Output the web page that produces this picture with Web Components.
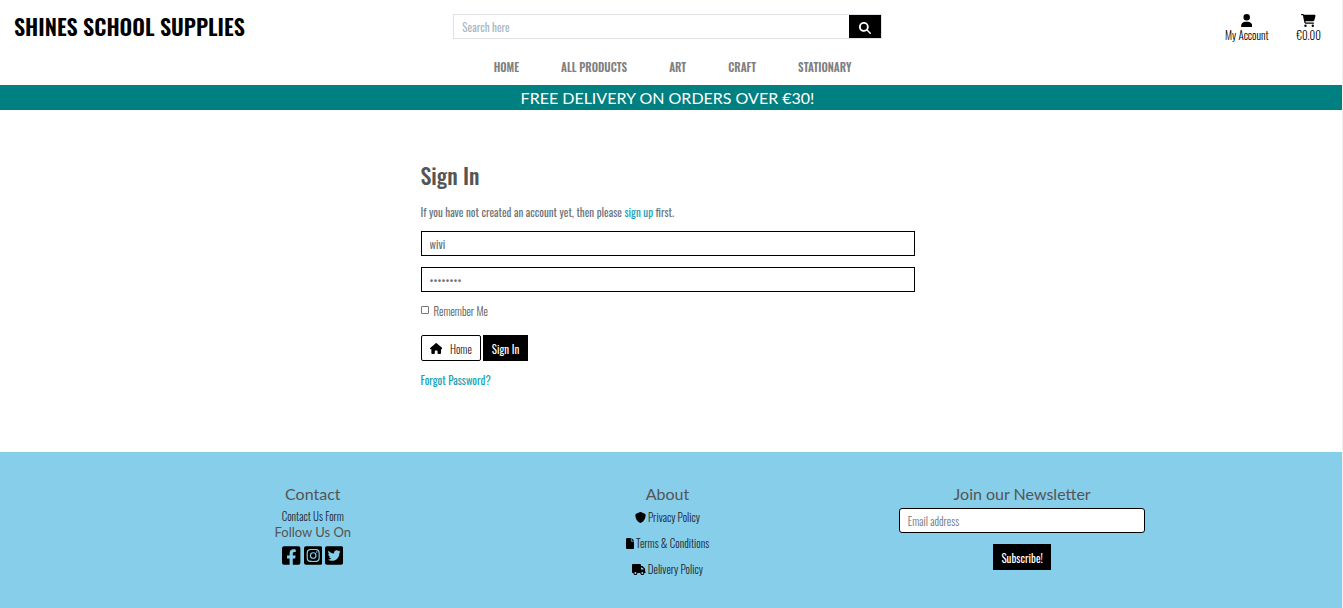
<!DOCTYPE html>
<html lang="en">
<head>
<meta charset="utf-8">
<meta name="viewport" content="width=device-width, initial-scale=1">
<title>Shines School Supplies</title>
<style>
  html { background: #fff; }
  body {
    margin: 0;
    --body-font: Oswald, "Liberation Sans Narrow", "Roboto Condensed", "Open Sans Condensed", "Liberation Sans", sans-serif;
    --title-font: Lato, sans-serif;
    --link: #17a2b8;
    font: 300 11px/16px var(--body-font);
    color: #555;
  }
</style>
</head>
<body>
<shop-app></shop-app>

<script>
const ICONS = {
  search: [512, 'M416 208c0 45.9-14.9 88.3-40 122.7L502.6 457.4c12.5 12.5 12.5 32.8 0 45.3s-32.8 12.5-45.3 0L330.7 376c-34.4 25.2-76.8 40-122.7 40C93.1 416 0 322.9 0 208S93.1 0 208 0S416 93.1 416 208zM208 338a130 130 0 1 0 0-260 130 130 0 1 0 0 260z'],
  user: [448, 'M224 256A128 128 0 1 0 224 0a128 128 0 1 0 0 256zm-45.7 48C79.8 304 0 383.8 0 482.3C0 498.7 13.3 512 29.7 512H418.3c16.4 0 29.7-13.3 29.7-29.7C448 383.8 368.2 304 269.7 304H178.3z'],
  cart: [576, 'M0 24C0 10.7 10.7 0 24 0H69.5c22 0 41.5 12.8 50.6 32h411c26.3 0 45.5 25 38.6 50.4l-41 152.3c-8.5 31.4-37 53.3-69.5 53.3H170.7l5.4 28.5c2.2 11.3 12.1 19.5 23.6 19.5H488c13.3 0 24 10.7 24 24s-10.7 24-24 24H199.7c-34.6 0-64.3-24.6-70.7-58.5L77.4 54.5c-.7-3.8-4-6.5-7.9-6.5H24C10.7 48 0 37.3 0 24zM128 464a48 48 0 1 1 96 0 48 48 0 1 1 -96 0zm336-48a48 48 0 1 1 0 96 48 48 0 1 1 0-96z'],
  home: [576, 'M575.8 255.5c0 18-15 32.1-32 32.1h-32l.7 160.2c0 2.7-.2 5.4-.5 8.1V472c0 22.1-17.9 40-40 40H456c-1.1 0-2.2 0-3.3-.1c-1.4 .1-2.8 .1-4.2 .1H416 392c-22.1 0-40-17.9-40-40V448 384c0-17.7-14.3-32-32-32H256c-17.7 0-32 14.3-32 32v64 24c0 22.1-17.9 40-40 40H160 128.1c-1.5 0-3-.1-4.5-.2c-1.2 .1-2.4 .2-3.6 .2H104c-22.1 0-40-17.9-40-40V360c0-.9 0-1.9 .1-2.8V287.6H32c-18 0-32-14-32-32.1c0-9 3-17 10-24L266.4 8c7-7 15-8 22-8s15 2 21 7L564.8 231.5c8 7 12 15 11 24z'],
  shield: [512, 'M256 0c4.6 0 9.2 1 13.4 2.9L457.7 82.8c22 9.3 38.4 31 38.3 57.2c-.5 99.2-41.3 280.7-213.6 363.2c-16.7 8-36.1 8-52.8 0C57.3 420.7 16.5 239.2 16 140c-.1-26.2 16.3-47.9 38.3-57.2L242.7 2.9C246.8 1 251.4 0 256 0z'],
  file: [384, 'M0 64C0 28.7 28.7 0 64 0H224V128c0 17.7 14.3 32 32 32H384V448c0 35.3-28.7 64-64 64H64c-35.3 0-64-28.7-64-64V64zm384 64H256V0L384 128z'],
  truck: [640, 'M48 0C21.5 0 0 21.5 0 48V368c0 26.5 21.5 48 48 48H64c0 53 43 96 96 96s96-43 96-96H384c0 53 43 96 96 96s96-43 96-96h32c17.7 0 32-14.3 32-32s-14.3-32-32-32V288 256 237.3c0-17-6.7-33.3-18.7-45.3L512 114.7c-12-12-28.3-18.7-45.3-18.7H416V48c0-26.5-21.5-48-48-48H48zM416 160h50.7L544 237.3V256H416V160zM112 416a48 48 0 1 1 96 0 48 48 0 1 1 -96 0zm368-48a48 48 0 1 1 0 96 48 48 0 1 1 0-96z'],
  facebook: [448, 'M400 32H48A48 48 0 0 0 0 80v352a48 48 0 0 0 48 48h137.25V327.69h-63V256h63v-54.64c0-62.15 37-96.48 93.67-96.48 27.14 0 55.52 4.84 55.52 4.84v61h-31.27c-30.81 0-40.42 19.12-40.42 38.73V256h68.78l-11 71.69h-57.78V480H400a48 48 0 0 0 48-48V80a48 48 0 0 0-48-48z'],
  instagram: [448, 'M224,202.66A53.34,53.34,0,1,0,277.36,256,53.38,53.38,0,0,0,224,202.66Zm124.71-41a54,54,0,0,0-30.41-30.41c-21-8.29-71-6.43-94.3-6.43s-73.25-1.93-94.31,6.43a54,54,0,0,0-30.41,30.41c-8.28,21-6.43,71.05-6.43,94.33S91,329.26,99.32,350.33a54,54,0,0,0,30.41,30.41c21,8.29,71,6.43,94.31,6.43s73.24,1.93,94.3-6.43a54,54,0,0,0,30.41-30.41c8.35-21,6.43-71.05,6.43-94.33S357.1,182.74,348.75,161.67ZM224,338a82,82,0,1,1,82-82A81.9,81.9,0,0,1,224,338Zm85.38-148.3a19.14,19.14,0,1,1,19.13-19.14A19.1,19.1,0,0,1,309.42,189.74ZM400,32H48A48,48,0,0,0,0,80V432a48,48,0,0,0,48,48H400a48,48,0,0,0,48-48V80A48,48,0,0,0,400,32ZM382.88,322c-1.29,25.63-7.14,48.34-25.85,67s-41.4,24.63-67,25.85c-26.41,1.49-105.59,1.49-132,0-25.63-1.29-48.26-7.15-67-25.85s-24.63-41.42-25.85-67c-1.49-26.42-1.49-105.61,0-132,1.29-25.63,7.07-48.34,25.85-67s41.47-24.56,67-25.78c26.41-1.49,105.59-1.49,132,0,25.63,1.29,48.33,7.15,67,25.85s24.63,41.42,25.85,67.05C384.37,216.44,384.37,295.56,382.88,322Z'],
  twitter: [448, 'M400 32H48C21.5 32 0 53.5 0 80v352c0 26.5 21.5 48 48 48h352c26.5 0 48-21.5 48-48V80c0-26.5-21.5-48-48-48zm-48.9 158.8c.2 2.8.2 5.7.2 8.5 0 86.7-66 186.6-186.6 186.6-37.2 0-71.7-10.8-100.7-29.4 5.3.6 10.4.8 15.8.8 30.7 0 58.9-10.4 81.4-28-28.8-.6-53-19.5-61.3-45.5 10.1 1.5 19.2 1.5 29.6-1.2-30-6.1-52.5-32.5-52.5-64.4v-.8c8.7 4.9 18.9 7.9 29.6 8.3a65.447 65.447 0 0 1-29.2-54.6c0-12.2 3.2-23.4 8.9-33.1 32.3 39.8 80.8 65.8 135.2 68.6-9.3-44.5 24-80.6 64-80.6 18.9 0 35.9 7.9 47.9 20.7 14.8-2.8 29-8.3 41.6-15.8-4.9 15.2-15.2 28-28.8 36.1 13.2-1.4 26-5.1 37.8-10.2-8.9 13.1-20.1 24.7-32.9 34z']
};

const define = (name, html) => customElements.define(name, class extends HTMLElement {
  constructor() {
    super();
    this.attachShadow({ mode: 'open' }).innerHTML = html;
  }
});

/* <shop-icon name="cart">: height comes from --size, width from the glyph's box. */
customElements.define('shop-icon', class extends HTMLElement {
  connectedCallback() {
    if (this.shadowRoot) return;
    const [width, path] = ICONS[this.getAttribute('name')];
    this.attachShadow({ mode: 'open' }).innerHTML = `
      <style>
        :host { display: inline-flex; flex: none; }
        svg { display: block; height: var(--size, 11px); fill: currentColor; }
      </style>
      <svg viewBox="0 0 ${width} 512" aria-hidden="true"><path d="${path}"/></svg>`;
  }
});

define('shop-search', `
  <style>
    :host { display: block; }
    form { display: flex; border: 1px solid #dee2e6; height: 23px; }
    input { flex: 1; min-width: 0; border: 0; padding: 1px 8px 0; background: #fff; font: inherit; font-weight: 400; color: #495057; outline: 0; }
    input::placeholder { color: #aab7c4; opacity: 1; }
    button { width: 32px; border: 0; padding: 3px 0 0; background: #000; color: #fff; display: flex; align-items: center; justify-content: center; }
    button shop-icon { --size: 12px; }
  </style>
  <form role="search">
    <input type="search" name="q" placeholder="Search here" aria-label="Search here">
    <button type="submit" aria-label="Search"><shop-icon name="search"></shop-icon></button>
  </form>`);

define('shop-header', `
  <style>
    :host { display: block; }
    .top { display: grid; grid-template-columns: 1fr 1fr 1fr; height: 55px; align-items: start; }
    .logo { padding: 10px 14px 0; font-size: 22px; line-height: 32px; font-weight: 600; color: #000; text-decoration: none; white-space: nowrap; }
    shop-search { margin: 14px 13px 0 6px; }
    .tools { display: flex; justify-content: flex-end; gap: 28px; padding: 14px 21px 0 0; }
    .tools a { display: flex; flex-direction: column; align-items: center; color: #000; text-decoration: none; --size: 13px; }
    nav ul { display: flex; justify-content: center; gap: 42px; margin: 0; padding: 4px 0 10px 3px; list-style: none; }
    nav a { font-weight: 600; color: #808080; text-decoration: none; }
  </style>
  <div class="top">
    <a class="logo" href="#home">SHINES SCHOOL SUPPLIES</a>
    <shop-search></shop-search>
    <div class="tools">
      <a href="#account"><shop-icon name="user"></shop-icon><span>My Account</span></a>
      <a href="#bag"><shop-icon name="cart"></shop-icon><span>€0.00</span></a>
    </div>
  </div>
  <nav aria-label="Main">
    <ul>
      <li><a href="#home">HOME</a></li>
      <li><a href="#products">ALL PRODUCTS</a></li>
      <li><a href="#art">ART</a></li>
      <li><a href="#craft">CRAFT</a></li>
      <li><a href="#stationary">STATIONARY</a></li>
    </ul>
  </nav>`);

define('shop-banner', `
  <style>
    :host { display: block; padding: 1px 15px 0 8px; background: teal; color: #fff; font: 16px/24px var(--title-font); text-align: center; }
  </style>
  <slot></slot>`);

define('shop-signin', `
  <style>
    :host { display: block; padding-right: 7px; }
    section { box-sizing: border-box; max-width: 494px; margin: 0 auto; padding: 49px 0 64px; }
    h1 { margin: 0 0 13px; font-size: 22px; line-height: 32px; font-weight: 500; color: #555; }
    p { margin: 0 0 11px; line-height: 16px; color: #6c757d; }
    a { color: var(--link); text-decoration: none; }
    p, .forgot { font-weight: 400; }
    .field { display: block; box-sizing: border-box; width: 100%; height: 25px; margin-bottom: 11px; border: 1px solid #000; border-radius: 0; padding: 1px 8px 0; font: inherit; font-weight: 400; color: #6c757d; background: #fff; outline: 0; }
    .remember { display: flex; align-items: center; gap: 5px; margin: 11px 0 16px; }
    .remember input { width: 8px; height: 8px; margin: 0 0 2px; }
    .remember input { appearance: none; box-sizing: border-box; border: 1px solid #767676; border-radius: 1px; background: #fff; }
    .remember input:checked { background: var(--link); }
    .actions { display: flex; gap: 2px; margin-bottom: 11px; }
    .home, .submit { display: flex; align-items: center; box-sizing: border-box; height: 26px; border: 1px solid #000; padding: 1px 8px 0; font: inherit; }
    .home { gap: 8px; color: #212529; border-radius: 2px; }
    .home shop-icon { color: #000; }
    .submit { background: #000; color: #fff; font-weight: 400; }
  </style>
  <section>
    <h1>Sign In</h1>
    <p>If you have not created an account yet, then please <a href="#signup">sign up</a> first.</p>
    <form>
      <input class="field" type="text" name="login" value="wivi" aria-label="Username" autocomplete="username">
      <input class="field" type="password" name="password" value="password" aria-label="Password" autocomplete="current-password">
      <div class="remember">
        <input type="checkbox" id="remember" name="remember">
        <label for="remember">Remember Me</label>
      </div>
      <div class="actions">
        <a class="home" href="#home"><shop-icon name="home"></shop-icon>Home</a>
        <button class="submit" type="submit">Sign In</button>
      </div>
    </form>
    <a class="forgot" href="#forgot">Forgot Password?</a>
  </section>`);

define('footer-column', `
  <style>
    :host { display: flex; flex-direction: column; align-items: center; text-align: center; }
    h2 { margin: 0 0 4px; font: 16px/20px var(--title-font); color: #555; }
  </style>
  <h2><slot name="title"></slot></h2>
  <slot></slot>`);

define('shop-footer', `
  <style>
    :host { display: block; background: #87ceeb; padding: 32px 7px 30px 0; }
    .columns { display: grid; grid-template-columns: repeat(3, 1fr); max-width: 1064px; margin: 0 auto; }
    a { color: #212529; text-decoration: none; }
    h3 { margin: 0; font: 13px/16px var(--title-font); color: #555; }
    .social { display: flex; gap: 3px; margin-top: 5px; --size: 21px; }
    .social a, .policies shop-icon { color: #000; }
    .policies { display: flex; flex-direction: column; gap: 10px; margin: 1px 0 0; padding: 0; list-style: none; }
    .policies a { display: flex; justify-content: center; align-items: center; gap: 2px; }
    form { display: flex; flex-direction: column; align-items: center; align-self: stretch; gap: 11px; padding: 0 54px; }
    input { box-sizing: border-box; width: 100%; height: 25px; border: 1px solid #000; border-radius: 3px; padding: 1px 8px 0; font: inherit; background: #fff; outline: 0; }
    input::placeholder { color: #6c757d; opacity: 1; }
    button { height: 26px; border: 0; padding: 1px 8px 0; background: #000; color: #fff; font: inherit; font-weight: 400; }
  </style>
  <footer class="columns">
    <footer-column>
      <span slot="title">Contact</span>
      <a href="#contact">Contact Us Form</a>
      <h3>Follow Us On</h3>
      <div class="social">
        <a href="#facebook" aria-label="Facebook"><shop-icon name="facebook"></shop-icon></a>
        <a href="#instagram" aria-label="Instagram"><shop-icon name="instagram"></shop-icon></a>
        <a href="#twitter" aria-label="Twitter"><shop-icon name="twitter"></shop-icon></a>
      </div>
    </footer-column>
    <footer-column>
      <span slot="title">About</span>
      <ul class="policies">
        <li><a href="#privacy"><shop-icon name="shield"></shop-icon>Privacy Policy</a></li>
        <li><a href="#terms"><shop-icon name="file"></shop-icon>Terms &amp; Conditions</a></li>
        <li><a href="#delivery"><shop-icon name="truck"></shop-icon>Delivery Policy</a></li>
      </ul>
    </footer-column>
    <footer-column>
      <span slot="title">Join our Newsletter</span>
      <form>
        <input type="email" name="email" placeholder="Email address" aria-label="Email address">
        <button type="submit">Subscribe!</button>
      </form>
    </footer-column>
  </footer>`);

define('shop-app', `
  <style>
    :host { display: flex; flex-direction: column; min-height: 100vh; box-sizing: border-box; border-right: 1px solid #f0f0f0; }
    shop-footer { flex: 1; }
  </style>
  <shop-header></shop-header>
  <shop-banner>FREE DELIVERY ON ORDERS OVER €30!</shop-banner>
  <main><shop-signin></shop-signin></main>
  <shop-footer></shop-footer>`);
</script>
</body>
</html>
